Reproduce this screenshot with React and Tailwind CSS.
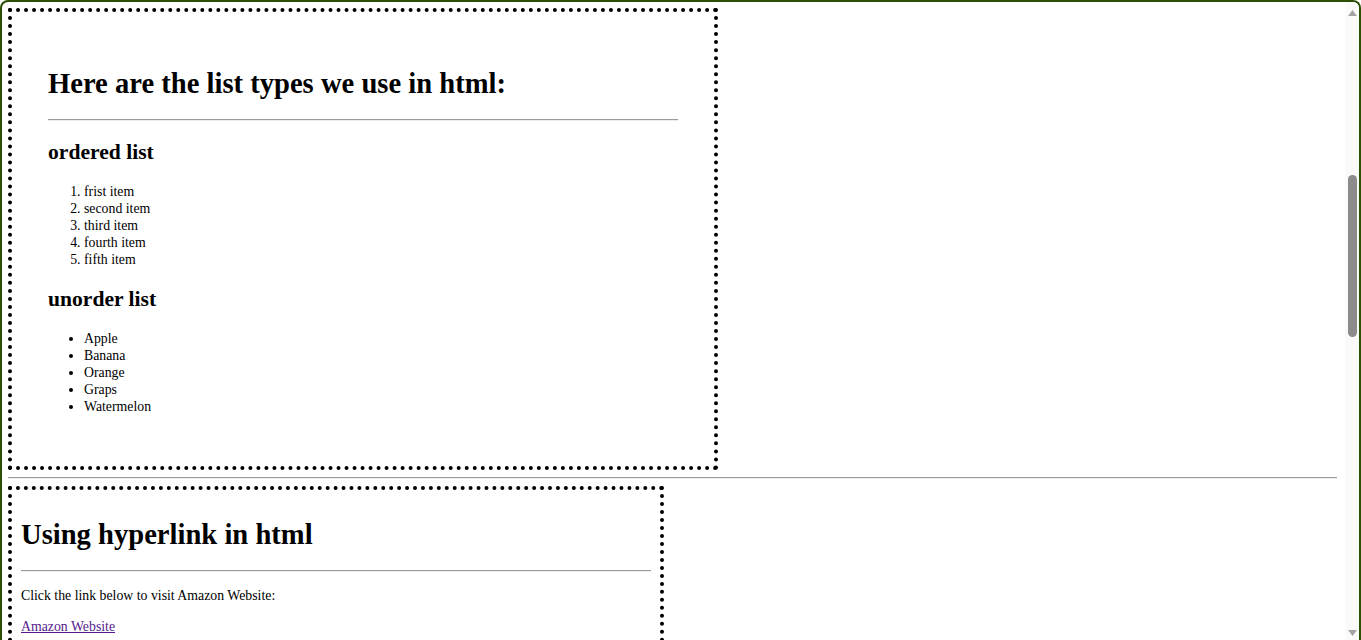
import React from "react";

const serif = { fontFamily: '"Liberation Serif", "Times New Roman", serif' };

function Hr({ className = "" }) {
  return <div className={"h-[2px] border-t border-t-[#9a9a9a] border-b border-b-[#ededed] " + className} />;
}

export default function App() {
  const ordered = ["frist item", "second item", "third item", "fourth item", "fifth item"];
  const fruits = ["Apple", "Banana", "Orange", "Graps", "Watermelon"];
  return (
    <div className="w-[1361px] h-[640px] bg-white overflow-hidden">
      <div className="h-[640px] flex border-2 border-b-0 border-[#2b4f05] rounded-t-[8px] bg-white overflow-hidden text-black" style={serif}>
        {/* page */}
        <div className="flex-1 flex flex-col pl-[6px] pr-[8px] pt-[6px]">
          {/* box 1 */}
          <div className="w-[710px] h-[462px] border-4 border-dotted border-black px-[36px] pt-[55px] flex flex-col shrink-0">
            <h1 className="text-[28.6px] leading-[33px] font-bold">Here are the list types we use in html:</h1>
            <Hr className="mt-[19px]" />
            <h2 className="mt-[19px] text-[21.6px] leading-[25px] font-bold">ordered list</h2>
            <ol className="mt-[18px] pl-[36px] list-decimal text-[13.8px] leading-[17px]">
              {ordered.map((t) => (
                <li key={t}>{t}</li>
              ))}
            </ol>
            <h2 className="mt-[19px] text-[21.6px] leading-[25px] font-bold">unorder list</h2>
            <ul className="mt-[18px] pl-[36px] list-disc text-[13.8px] leading-[17px]">
              {fruits.map((t) => (
                <li key={t}>{t}</li>
              ))}
            </ul>
          </div>
          <Hr className="mt-[7px]" />
          {/* box 2 */}
          <div className="mt-[7px] w-[656px] h-[300px] border-4 border-dotted border-black px-[9px] pt-[28px] flex flex-col shrink-0">
            <h1 className="text-[28.6px] leading-[33px] font-bold">Using hyperlink in html</h1>
            <Hr className="mt-[19px]" />
            <p className="mt-[15px] text-[13.8px] leading-[17px]">Click the link below to visit Amazon Website:</p>
            <p className="mt-[14px] text-[13.8px] leading-[17px]">
              <a href="#" className="text-[#551a8b] underline">Amazon Website</a>
            </p>
          </div>
        </div>
        {/* scrollbar */}
        <div className="w-[14px] bg-[#fafafa] relative shrink-0">
          <svg className="absolute left-[3px] top-[7px]" width="9" height="8" viewBox="0 0 9 8">
            <polygon points="4.5,1 9,7 0,7" fill="#a3a3a3" />
          </svg>
          <div className="absolute left-[3px] top-[173px] w-[9px] h-[162px] rounded-full bg-[#8b8b8b]" />
          <svg className="absolute left-[3px] top-[627px]" width="9" height="8" viewBox="0 0 9 8">
            <polygon points="0,1 9,1 4.5,7" fill="#a3a3a3" />
          </svg>
        </div>
      </div>
    </div>
  );
}
